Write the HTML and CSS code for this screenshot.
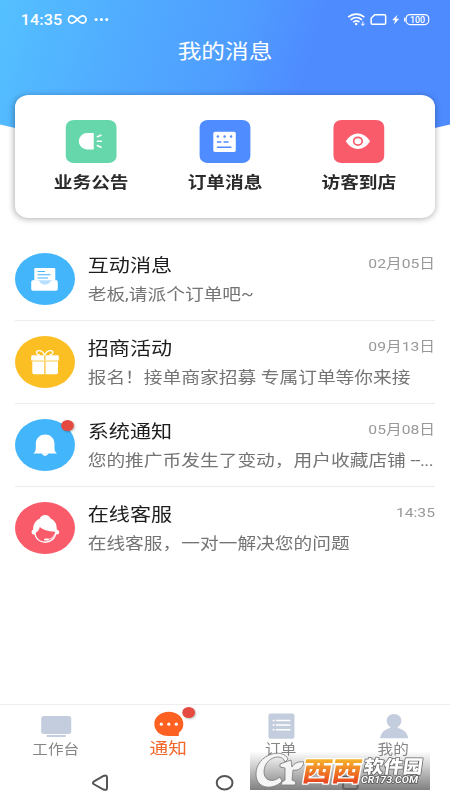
FILE: index.html
```html
<!DOCTYPE html>
<html lang="zh-CN">
<head>
<meta charset="utf-8">
<title>我的消息</title>
<link rel="stylesheet" href="styles.css">
</head>
<body>
<div class="app">
  <header class="header">
    <div class="status">
      <span class="time">14:35</span>
      <svg class="status-left" viewBox="66 12 46 15" preserveAspectRatio="none" fill="none" stroke="#fff">
        <path d="M77.5 19.5C75 16.6 73.700 15.900 72 15.900a3.300 3.600 0 0 0 0 7.200c3.800 0 7-7.200 11-7.200a3.300 3.600 0 0 1 0 7.200c-1.800 0-3-.8-5.500-3.600" stroke-width="1.700"/>
        <g fill="#fff" stroke="none"><circle cx="96.300" cy="19.500" r="1.500"/><circle cx="101.700" cy="19.500" r="1.500"/><circle cx="107" cy="19.500" r="1.500"/></g>
      </svg>
      <svg class="status-right" viewBox="346 12 86 15" preserveAspectRatio="none" fill="none" stroke="#fff">
        <path d="M348 17.200c4.800-4.200 11.500-4.200 16.200 0M350.500 19.800c3.500-3 8-3 11.300 0M353 22.200c2-1.700 4.300-1.700 6.300-.2" stroke-width="1.700"/>
        <circle cx="356" cy="24" r="1.300" fill="#fff" stroke="none"/>
        <path d="M362.700 21.500v4M361 23.700l1.700 1.800 1.700-1.800" stroke-width="1"/>
        <path d="M374.500 14.800h9.700q1.300 0 1.300 1.300v6.800q0 1.300-1.300 1.300h-11.900q-1.300 0-1.300-1.300v-4.600z" stroke-width="1.500"/>
        <path d="M397.300 14.800l-5.300 5.500h3l-1.300 4.200 5.400-5.800h-3z" fill="#fff" stroke="none"/>
        <rect x="406" y="14.600" width="22.600" height="10" rx="4" stroke-width="1.200"/>
        <path d="M404.600 17.800v3.600" stroke-width="1.500"/>
        <text x="410" y="22.600" textLength="15" lengthAdjust="spacingAndGlyphs" class="battery">100</text>
      </svg>
    </div>
    <h1 class="title">我的消息</h1>
  </header>

  <section class="card">
    <div class="shortcut">
      <svg class="tile green" viewBox="0 0 50 43" preserveAspectRatio="none">
        <path d="M28 13v16.500h-6.500a8.500 8.250 0 0 1 0-16.500z" fill="#fff"/>
        <path d="M31 17l4.800-2M31 21.300h5.300M31 25.300l4.800 2.200" stroke="#fff" stroke-width="1.500"/>
      </svg>
      <span>业务公告</span>
    </div>
    <div class="shortcut">
      <svg class="tile blue" viewBox="0 0 50 43" preserveAspectRatio="none">
        <rect x="13.700" y="11.700" width="22.500" height="20.300" rx="1.800" fill="#fff"/>
        <g fill="#4f8cff"><circle cx="18.300" cy="16.500" r="1.200"/><circle cx="25" cy="16.500" r="1.200"/><circle cx="31.500" cy="16.500" r="1.200"/></g>
        <path d="M17.300 22h4.500M24 22h5M17.300 27.300h14.500" stroke="#4f8cff" stroke-width="1.500"/>
      </svg>
      <span>订单消息</span>
    </div>
    <div class="shortcut">
      <svg class="tile red" viewBox="0 0 50 43" preserveAspectRatio="none">
        <path d="M12.300 21.300q5-7.800 12.200-7.800t12.200 7.800q-5 7.700-12.200 7.700t-12.200-7.700z" fill="#fff"/>
        <ellipse cx="24.500" cy="21.200" rx="4.300" ry="3.900" fill="none" stroke="#f95b6b" stroke-width="1.700"/>
      </svg>
      <span>访客到店</span>
    </div>
  </section>

  <main class="list">
    <article class="row">
      <div class="avatar sky">
        <svg viewBox="0 0 60 52" preserveAspectRatio="none">
          <rect x="19.300" y="15" width="21" height="18" rx="1.200" fill="#fff"/>
          <path d="M22.500 18.500h7.500M22.500 21.700h13M22.500 25h10.500" stroke="#42b5fb" stroke-width="1.100"/>
          <path d="M17.500 27.200H42v8H17z" fill="#b5e1fe"/>
          <path d="M17.500 27.200h5.300q1.500 0 2 1.500 1.500 2.800 5.200 2.800t5.200-2.800q.5-1.500 2-1.500H41q1.800 0 1.800 1.800v7q0 1.700-1.800 1.700H18q-1.800 0-1.800-1.700v-7q0-1.800 1.800-1.800z" fill="#fff"/>
        </svg>
      </div>
      <div class="body">
        <div class="top"><h2>互动消息</h2><time>02月05日</time></div>
        <p>老板,请派个订单吧~</p>
      </div>
    </article>
    <article class="row">
      <div class="avatar amber">
        <svg viewBox="0 0 60 52" preserveAspectRatio="none">
          <path d="M29.700 19.200c-2-4-5-5-7-4.300-2.500 1-.8 4 2.200 4M29.700 19.200c2-4 5-5 7-4.300 2.500 1 .8 4-2.200 4" fill="none" stroke="#fff" stroke-width="1.400"/>
          <path d="M17.500 19.300h11.800v5H16.200v-3.700q0-1.300 1.300-1.300zM30.500 19.300h12q1.300 0 1.300 1.300v3.700H30.500zM17.300 25.500h12v12.700H19q-1.700 0-1.700-1.700zM30.500 25.500H43v11q0 1.700-1.700 1.700H30.500z" fill="#fff"/>
          <path d="M16.500 24.800h27" stroke="#fff0c2" stroke-width="1"/>
        </svg>
      </div>
      <div class="body">
        <div class="top"><h2>招商活动</h2><time>09月13日</time></div>
        <p>报名！接单商家招募 专属订单等你来接</p>
      </div>
    </article>
    <article class="row">
      <div class="avatar sky">
        <svg viewBox="0 0 60 52" preserveAspectRatio="none">
          <path d="M18.200 34.500q2.600-1.500 2.600-5.500v-4c0-12.700 18.700-12.700 18.700 0v4q0 4 2.600 5.500z" fill="#fff"/>
          <path d="M26.500 34.300q1.200 2.700 3.600 2.700t3.600-2.700z" fill="#fff"/>
        </svg>
        <i class="dot"></i>
      </div>
      <div class="body">
        <div class="top"><h2>系统通知</h2><time>05月08日</time></div>
        <p>您的推广币发生了变动，用户收藏店铺 <span class="tail">--...</span></p>
      </div>
    </article>
    <article class="row">
      <div class="avatar rose">
        <svg viewBox="0 0 60 52" preserveAspectRatio="none">
          <path d="M18 32.500c-2-1.300-1.800-4.200.2-5C18 22 20.500 18.500 25 16.500c.5-4.700 9.500-4.700 10.500 0 4.500 1.800 6.500 6 6.300 11 3 1 3.300 3.900.7 5z" fill="#fff"/>
          <ellipse cx="30.300" cy="31" rx="10.900" ry="9.900" fill="#fff"/>
          <path d="M20.800 30.500q3-1.200 4-5.500 4 4.200 15.200 4.800c.5 12-19.200 13.500-19.200.7z" fill="#f95b6b"/>
          <path d="M40 32q-2.500 5.300-7 5.700" stroke="#fff" fill="none" stroke-width=".8"/>
          <rect x="29" y="36.500" width="5" height="2" rx="1" fill="#fff"/>
        </svg>
      </div>
      <div class="body">
        <div class="top"><h2>在线客服</h2><time>14:35</time></div>
        <p>在线客服，一对一解决您的问题</p>
      </div>
    </article>
  </main>

  <nav class="tabs">
    <div class="tab">
      <svg viewBox="0 0 34 30" preserveAspectRatio="none" fill="#c4cddd"><rect x="2" y="5" width="30" height="18" rx="2.500"/><rect x="7.500" y="24" width="19" height="2"/></svg>
      <span>工作台</span>
    </div>
    <div class="tab active">
      <svg viewBox="0 0 34 30" preserveAspectRatio="none"><path d="M16.500 .8C8.500 .8 2 6 2 12.900S8 25 16 25H26.500v-3.200c3-2 4.500-5 4.500-8.800C31 6 24.500 .8 16.500 .8z" fill="#fc6121"/><g fill="#fff"><circle cx="9" cy="13.200" r="1.600"/><circle cx="16.500" cy="13.200" r="1.600"/><circle cx="24" cy="13.200" r="1.600"/></g></svg>
      <span>通知</span>
      <i class="dot"></i>
    </div>
    <div class="tab">
      <svg viewBox="0 0 34 30" preserveAspectRatio="none"><rect x="4.200" y="2.500" width="26" height="25.300" rx="2" fill="#c4cddd"/><path d="M8.400 9.500h2M11.700 9.500h14.500M8.400 14h2M11.700 14h14.500M8.400 18.700h2M11.700 18.700h14.500" stroke="#fff" stroke-width="1.600"/></svg>
      <span>订单</span>
    </div>
    <div class="tab">
      <svg viewBox="0 0 34 30" preserveAspectRatio="none" fill="#c4cddd"><path d="M16.700 3c-4.500 0-7.300 3-7.300 6.700 0 3 1.600 5 3.700 6.200v1.100C7.500 18.300 4 21 2.700 27.300h28.300c-1.300-6.300-5-9-10.600-10.300v-1.100c2.100-1.200 3.700-3.200 3.700-6.200 0-3.700-2.900-6.700-7.400-6.700z"/></svg>
      <span>我的</span>
    </div>
  </nav>

  <footer class="sysnav">
    <svg viewBox="0 0 20 20" preserveAspectRatio="none"><path d="M3.600 8.700L13.500 3q3.500-1.300 3.500 1.500v10.500q0 2.700-3.500 1.500L3.600 11q-1.300-1.100 0-2.300z"/></svg>
    <svg viewBox="0 0 20 20" preserveAspectRatio="none"><ellipse cx="10" cy="9.800" rx="7.900" ry="6.800"/></svg>
    <svg viewBox="0 0 20 20" preserveAspectRatio="none"><rect x="2.700" y="3.500" width="14.500" height="12.500" rx="2"/></svg>
  </footer>
</div>

<div class="watermark">
  <svg viewBox="250 748 180 44">
    <defs>
      <linearGradient id="orange" x1="0" y1="0" x2="0" y2="1"><stop offset="0.250" stop-color="#f7b52c"/><stop offset="0.850" stop-color="#e8471f"/></linearGradient>
    </defs>
    <g class="mark-cr">
      <path d="M288 759C286 754 279 752 272 754C262 757 256 765 256 774C256 783 262 788 271 787C276 786 280 784 282 781L280 777C273 783 264 781 264 772C264 763 271 757 278 757C282 757 284 759 285 762Z"/>
      <path d="M280 764L291 760L292 767C294 763 299 761 304 762C303 768 298 771 293 770L292 780L296 782L295 785H281L282 782L285 780V768L280 767Z"/>
    </g>
    <text class="mark-orange" transform="translate(301 780.500) skewX(-10)" textLength="59" lengthAdjust="spacingAndGlyphs">西西</text>
    <text class="mark-name" transform="translate(363 773) skewX(-8)" textLength="59" lengthAdjust="spacingAndGlyphs">软件园</text>
    <text class="mark-url" x="361" y="783" textLength="57" lengthAdjust="spacingAndGlyphs">CR173.COM</text>
  </svg>
</div>
</body>
</html>
```
FILE: styles.css
```css
* { box-sizing: border-box; margin: 0; padding: 0; }

body {
  position: relative;
  width: 450px;
  height: 800px;
  overflow: hidden;
  background: #fff;
  font-family: Roboto, "Noto Sans CJK SC", sans-serif;
}

/* 390-unit layout widened to fill the 450px window */
.app {
  display: flex;
  flex-direction: column;
  width: 390px;
  height: 800px;
  transform: scaleX(1.153846);
  transform-origin: 0 0;
}

svg { display: block; flex: none; }

.header {
  height: 152px;
  flex: none;
  color: #fff;
  background: linear-gradient(105deg, #54c0ff 0%, #51adff 25%, #4f9dff 50%, #4e8bff 66%, #4e8bff 100%);
  clip-path: path("M0 0H390V124.500Q195 180 0 124.500Z");
}

.status {
  display: flex;
  align-items: center;
  height: 39px;
  padding: 0 15.600px 0 18px;
}
.time { font-size: 14px; font-weight: 500; line-height: 16px; letter-spacing: .1px; }
.status-left { width: 39.870px; height: 15px; margin-left: 2.500px; }
.status-right { width: 74.530px; height: 15px; margin-left: auto; }
.battery { font-size: 8.500px; font-weight: 500; fill: #fff; stroke: none; }

.title {
  padding-top: 1px;
  font-size: 20.500px;
  font-weight: 400;
  line-height: 24px;
  text-align: center;
}

.card {
  position: relative;
  display: flex;
  flex: none;
  height: 123px;
  margin: -57px 13px 0;
  padding: 25px 8px 0;
  border-radius: 12px;
  background: #fff;
  box-shadow: 0 1px 6px rgba(0, 0, 0, .32);
}
.shortcut {
  flex: 1;
  display: flex;
  flex-direction: column;
  align-items: center;
  gap: 8px;
  color: #2b2b2b;
  font-size: 16.200px;
  font-weight: 700;
  line-height: 24px;
}
.tile { width: 43.300px; height: 43px; border-radius: 7px; }
.green { background: #66d7ab; }
.blue { background: #4f8cff; }
.red { background: #f95b6b; }

.list { margin: 20px 13px 0; }
.row {
  display: flex;
  gap: 11px;
  height: 83px;
  padding-top: 15px;
  border-bottom: 1px solid #ececec;
}
.row:last-child { border-bottom: 0; }
.avatar { position: relative; flex: none; width: 52px; height: 52px; border-radius: 50%; }
.avatar svg { width: 52px; height: 52px; }
.sky { background: #42b5fb; }
.amber { background: #fbbf24; }
.rose { background: #f95b6b; }
.dot {
  position: absolute;
  width: 11px;
  height: 11px;
  border-radius: 50%;
  background: #e44a40;
  box-shadow: 1px 1px 2px rgba(0, 0, 0, .25);
}
.avatar .dot { top: 1px; right: 1px; }

.body { flex: 1; min-width: 0; }
.top { display: flex; justify-content: space-between; }
.top h2 { font-size: 18.300px; font-weight: 400; line-height: 26px; color: #1d1d1f; }
.top time { font-size: 13.600px; line-height: 20px; color: #999; }
.body p {
  margin-top: 3px;
  font-size: 16.230px;
  line-height: 26px;
  color: #747474;
  white-space: nowrap;
}
.tail { letter-spacing: -.4px; }

.tabs {
  display: flex;
  height: 62px;
  margin-top: auto;
  border-top: 1px solid #eee;
}
.tab {
  position: relative;
  flex: 1;
  display: flex;
  flex-direction: column;
  align-items: center;
  padding-top: 6px;
  font-size: 13.500px;
  line-height: 20px;
  color: #858585;
}
.tab svg { width: 29.470px; height: 30px; }
.tab span { margin-top: -2px; margin-left: -1px; }
.tab.active { font-size: 16.200px; color: #f2682c; }
.tab .dot { top: 2px; left: 60.500px; }

.sysnav {
  display: flex;
  justify-content: space-around;
  height: 34px;
  padding: 7px 32.500px 0;
}
.sysnav svg { width: 17.330px; height: 20px; fill: none; stroke: #555; stroke-width: 2; }

.watermark {
  position: absolute;
  left: 250px;
  top: 748px;
  width: 180px;
  height: 42px;
  background: linear-gradient(rgba(100, 100, 100, 0) 8%, rgba(100, 100, 100, .82));
}
.watermark svg { width: 180px; height: 44px; overflow: visible; }
.mark-cr { fill: #f5f5f5; stroke: #777; stroke-width: .8; }
.mark-orange, .mark-name, .mark-url { paint-order: stroke; stroke-linejoin: round; }
.mark-orange { font: 900 27px "Noto Sans CJK SC", sans-serif; fill: url(#orange); stroke: #fff; stroke-width: 2.500px; }
.mark-name { font: 900 18px "Noto Sans CJK SC", sans-serif; fill: #fff; stroke: #666; stroke-width: 1.500px; }
.mark-url { font: italic 700 9.500px Roboto, sans-serif; fill: #fff; stroke: #555; stroke-width: 1.500px; }
```
